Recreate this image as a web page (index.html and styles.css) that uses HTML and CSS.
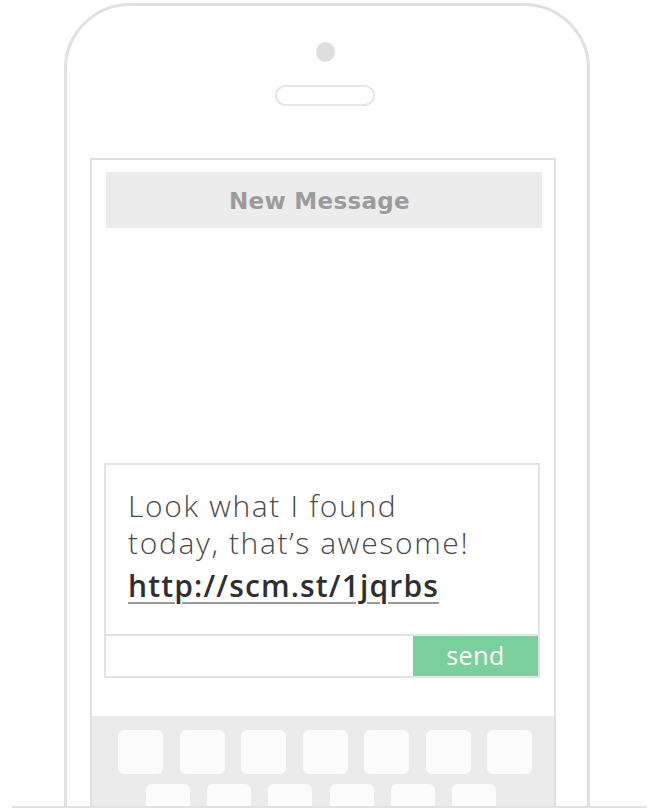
FILE: index.html
```html
<!DOCTYPE html>
<html lang="en">
<head>
<meta charset="utf-8">
<title>New Message</title>
<link rel="stylesheet" href="styles.css">
</head>
<body>
<div class="stage">
  <div class="phone">
    <div class="camera"></div>
    <div class="speaker"></div>
    <div class="screen">
      <div class="header">New Message</div>
      <div class="compose">
        <div class="message">
          <p class="text">Look what I found<br>today, that’s awesome!</p>
          <p class="link"><a href="#">http://scm.st/1jqrbs</a></p>
        </div>
        <div class="bar">
          <div class="field"></div>
          <button class="send">send</button>
        </div>
      </div>
      <div class="keyboard">
        <div class="row row1">
          <span class="key"></span><span class="key"></span><span class="key"></span><span class="key"></span><span class="key"></span><span class="key"></span><span class="key"></span>
        </div>
        <div class="row row2">
          <span class="key"></span><span class="key"></span><span class="key"></span><span class="key"></span><span class="key"></span><span class="key"></span>
        </div>
      </div>
    </div>
  </div>
</div>
<div class="baseline"></div>
</body>
</html>
```
FILE: styles.css
```css
html, body {
  margin: 0;
  padding: 0;
  background: #fff;
  overflow: hidden;
}
body {
  width: 654px;
  height: 810px;
  font-family: "Open Sans", "DejaVu Sans", sans-serif;
}
.stage {
  height: 806px;
  overflow: hidden;
  padding-top: 3px;
  box-sizing: border-box;
}
.phone {
  margin-left: 64px;
  width: 526px;
  height: 900px;
  box-sizing: border-box;
  border: 3px solid #e1e1e1;
  border-radius: 66px 66px 0 0;
  display: flex;
  flex-direction: column;
  align-items: flex-start;
}
.camera {
  width: 19px;
  height: 20px;
  border-radius: 50%;
  background: #dedede;
  margin: 36px 0 0 249px;
}
.speaker {
  width: 100px;
  height: 21px;
  box-sizing: border-box;
  border: 2px solid #e6e6e6;
  border-radius: 11px;
  margin: 23px 0 0 208px;
}
.screen {
  margin: 52px 0 0 23px;
  width: 466px;
  height: 700px;
  box-sizing: border-box;
  border: 2px solid #e0e0e0;
  border-bottom: 0;
  display: flex;
  flex-direction: column;
}
.header {
  margin: 12px 12px 0 14px;
  height: 56px;
  background: #ececec;
  display: flex;
  align-items: center;
  justify-content: center;
  padding: 2px 9px 0 0;
  box-sizing: border-box;
  font-family: "DejaVu Sans", sans-serif;
  font-weight: bold;
  font-size: 23px;
  letter-spacing: 0.3px;
  color: #9b9b9b;
}
.compose {
  margin: 235px 14px 0 12px;
  border: 2px solid #e3e3e3;
  display: flex;
  flex-direction: column;
}
.message {
  height: 169px;
  box-sizing: border-box;
  padding: 22px 0 0 22px;
}
.message p {
  margin: 0;
  font-size: 30px;
  line-height: 37px;
}
.text {
  font-weight: 300;
  letter-spacing: 1.65px;
  color: #4a4a4a;
}
.link {
  margin-top: 6px !important;
  font-weight: 600;
  letter-spacing: 1.15px;
}
.link a {
  color: #2f2f2f;
  text-decoration: underline;
  text-decoration-color: #9a9a9a;
  text-decoration-thickness: 2px;
  text-underline-offset: 5px;
}
.bar {
  border-top: 2px solid #e3e3e3;
  height: 40px;
  display: flex;
}
.field {
  flex: 1;
}
.send {
  width: 125px;
  height: 40px;
  border: 0;
  margin: 0;
  padding: 0 0 3px;
  background: #7ad09c;
  color: #fff;
  font-family: "Open Sans", "DejaVu Sans", sans-serif;
  font-weight: 500;
  font-size: 25px;
  letter-spacing: 0.5px;
}
.keyboard {
  margin-top: 38px;
  flex: 1;
  background: #ebebeb;
  padding-top: 14px;
  display: flex;
  flex-direction: column;
  gap: 10px;
}
.row {
  display: flex;
}
.row1 {
  padding-left: 26px;
  gap: 16.5px;
}
.row1 .key {
  width: 45px;
  height: 44px;
}
.row2 {
  padding-left: 54px;
  gap: 17.2px;
}
.row2 .key {
  width: 44px;
  height: 44px;
}
.key {
  background: #fbfbfb;
  border-radius: 6px;
}
.baseline {
  margin-left: 12px;
  width: 635px;
  height: 2px;
  background: #e2e2e2;
}
```
